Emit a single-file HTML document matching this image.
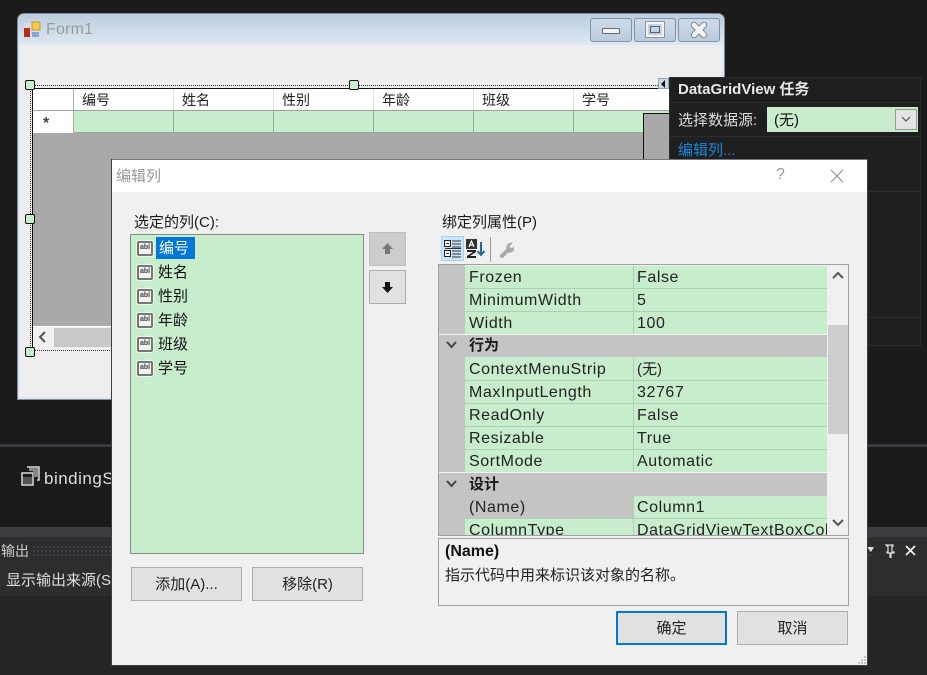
<!DOCTYPE html>
<html>
<head>
<meta charset="utf-8">
<style>
html,body{margin:0;padding:0;width:927px;height:675px;overflow:hidden;background:#1b1b1c}
body{position:relative;font-family:"Liberation Sans","Noto Sans CJK SC",sans-serif;font-size:15px;color:#1a1a1a}
div,span,svg{position:absolute;box-sizing:border-box}
.t{white-space:nowrap;line-height:20px;height:20px}
.h{font-size:14px;color:#222}
.g{letter-spacing:.58px;color:#222;font-size:16px}
.c{background:#c7edcc}
.btn{background:#e1e1e1;border:1px solid #adadad;text-align:center;line-height:33px;color:#222}
.hd{width:10px;height:10px;background:#c7edcc;border:1px solid #111;border-radius:2px}
.ab{width:16px;height:15px;background:#f2f2f2;border:2px solid #777;border-radius:2px;box-shadow:0 0 0 1px #eaf6ec;font:bold 7px/10px "Liberation Sans",sans-serif;text-align:center;color:#444;overflow:hidden}
.rowline{left:465px;width:362px;height:1px;background:#aed0b4}
.chev{left:445px;width:13px;height:10px}
</style>
</head>
<body>

<!-- IDE bottom -->
<div style="left:0;top:444px;width:927px;height:3px;background:#3a3a40"></div>
<svg style="left:20px;top:466px" width="21" height="21" viewBox="0 0 21 21"><path d="M7 1h12v13h-2M2 7h11v12H2z" fill="none" stroke="#ddd" stroke-width="1.5"/><path d="M9 2h9v9h-5V5H9z" fill="#888"/><path d="M3 11h9v7H3z" fill="#555"/></svg>
<div class="t" style="left:44px;top:469px;color:#ddd;font-size:17px;letter-spacing:.5px">bindingSource1</div>
<div style="left:0;top:527px;width:927px;height:10px;background:#3c3c42"></div>
<div style="left:0;top:537px;width:927px;height:28px;background:#2d2d30"></div>
<div style="left:32px;top:545px;width:840px;height:12px;background-image:radial-gradient(#46464a 1px,transparent 1px);background-size:4px 4px"></div>
<div style="left:0;top:565px;width:927px;height:31px;background:#2d2d30"></div>
<div style="left:0;top:596px;width:927px;height:79px;background:#252526"></div>
<div class="t" style="left:1px;top:541px;color:#ccc;font-size:14px">输出</div>
<div class="t" style="left:6px;top:571px;color:#ddd">显示输出来源(S):</div>
<svg style="left:866px;top:544px" width="50" height="14" viewBox="0 0 50 14"><path d="M1 3h7L5 8z" fill="#ddd"/><path d="M20 1h7v1h-1v6h2v1h-3v5h-1V9h-3V8h1V2h-1z" fill="none" stroke="#ddd" stroke-width="1.2"/><path d="M40 2l9 9M49 2l-9 9" stroke="#eee" stroke-width="1.8"/></svg>

<!-- Form -->
<div style="left:17px;top:13px;width:708px;height:387px;background:#dfe8f2;border:1px solid #7d8a99;border-radius:7px 7px 0 0;overflow:hidden"></div>
<div style="left:18px;top:14px;width:706px;height:31px;background:linear-gradient(#bccddd,#dde8f2);border-radius:6px 6px 0 0"></div>
<div style="left:20px;top:45px;width:702px;height:352px;background:#eeeeee"></div>
<svg style="left:23px;top:21px" width="18" height="18" viewBox="0 0 18 18"><rect x="1" y="2" width="16" height="16" fill="#d8dde4"/><rect x="1" y="7" width="6" height="9" fill="#b62a20"/><rect x="9" y="1" width="8" height="8" fill="#f3cc4d" stroke="#c99a2a"/><rect x="9" y="11" width="7" height="5" fill="#7fa8d8"/></svg>
<div class="t" style="left:46px;top:20px;color:#9a9a9a;font-size:16px;letter-spacing:.2px">Form1</div>
<div style="left:590px;top:18px;width:42px;height:24px;border:1px solid #8093a8;border-radius:3px;background:linear-gradient(#cddaea,#bccbdc)"></div>
<div style="left:634px;top:18px;width:42px;height:24px;border:1px solid #8093a8;border-radius:3px;background:linear-gradient(#cddaea,#bccbdc)"></div>
<div style="left:678px;top:18px;width:42px;height:24px;border:1px solid #8093a8;border-radius:3px;background:linear-gradient(#cddaea,#bccbdc)"></div>
<div style="left:602px;top:28px;width:18px;height:6px;background:#f4f4f4;border:1px solid #5f6b78;border-radius:1px"></div>
<div style="left:646px;top:22px;width:18px;height:15px;border:2px solid #f2f2f2;outline:1px solid #8a95a1"></div>
<div style="left:650px;top:26px;width:10px;height:7px;border:1px solid #55606c"></div>
<svg style="left:689px;top:21px" width="20" height="18" viewBox="0 0 20 18"><path d="M5 4l10 10M15 4L5 14" stroke="#7a8490" stroke-width="6.500" stroke-linecap="round"/><path d="M5 4l10 10M15 4L5 14" stroke="#f4f4f4" stroke-width="4.500" stroke-linecap="round"/></svg>

<!-- DGV -->
<div style="left:33px;top:88px;width:636px;height:240px;background:#a9a9a9"></div>
<div style="left:33px;top:88px;width:636px;height:23px;background:#fff;border-bottom:1px solid #a0a0a0"></div>
<div style="left:33px;top:111px;width:40px;height:22px;background:#fff"></div>
<div class="c" style="left:73px;top:111px;width:596px;height:22px;border-bottom:1px solid #9aa89c"></div>
<div style="left:32px;top:88px;width:637px;height:1px;background:#111"></div>
<div style="left:32px;top:88px;width:1px;height:262px;background:#111"></div>
<div style="left:73px;top:89px;width:1px;height:44px;background:#a7b3a9"></div>
<div style="left:173px;top:111px;width:1px;height:22px;background:#9aa89c"></div>
<div style="left:273px;top:111px;width:1px;height:22px;background:#9aa89c"></div>
<div style="left:373px;top:111px;width:1px;height:22px;background:#9aa89c"></div>
<div style="left:473px;top:111px;width:1px;height:22px;background:#9aa89c"></div>
<div style="left:573px;top:111px;width:1px;height:22px;background:#9aa89c"></div>
<div style="left:173px;top:89px;width:1px;height:21px;background:#e3e3e3"></div>
<div style="left:273px;top:89px;width:1px;height:21px;background:#e3e3e3"></div>
<div style="left:373px;top:89px;width:1px;height:21px;background:#e3e3e3"></div>
<div style="left:473px;top:89px;width:1px;height:21px;background:#e3e3e3"></div>
<div style="left:573px;top:89px;width:1px;height:21px;background:#e3e3e3"></div>
<div style="left:643px;top:113px;width:26px;height:50px;background:#a9a9a9;border-left:1px solid #111;border-top:1px solid #111"></div>
<div class="t h" style="left:82px;top:90px">编号</div>
<div class="t h" style="left:182px;top:90px">姓名</div>
<div class="t h" style="left:282px;top:90px">性别</div>
<div class="t h" style="left:382px;top:90px">年龄</div>
<div class="t h" style="left:482px;top:90px">班级</div>
<div class="t h" style="left:582px;top:90px">学号</div>
<div class="t" style="left:43px;top:114px;font-size:16px;font-weight:bold;color:#444">*</div>
<div style="left:33px;top:326px;width:80px;height:24px;background:#f0f0f0;border-top:1px solid #fff"></div>
<div style="left:54px;top:328px;width:60px;height:19px;background:#c8c8c8"></div>
<svg style="left:38px;top:331px" width="10" height="12" viewBox="0 0 10 12"><path d="M7 1L2 6l5 5" fill="none" stroke="#555" stroke-width="2"/></svg>
<div style="left:30px;top:85px;width:630px;height:1px;border-top:1px dotted #333"></div>
<div style="left:30px;top:350px;width:90px;height:1px;border-top:1px dotted #333"></div>
<div style="left:30px;top:85px;width:1px;height:265px;border-left:1px dotted #333"></div>
<div class="hd" style="left:25px;top:80px"></div>
<div class="hd" style="left:349px;top:80px"></div>
<div class="hd" style="left:25px;top:214px"></div>
<div class="hd" style="left:25px;top:347px"></div>
<div style="left:658px;top:78px;width:11px;height:11px;background:#c9d9ea;border:1px solid #8aa"></div>
<svg style="left:660px;top:80px" width="7" height="8" viewBox="0 0 7 8"><path d="M5 0v8L1 4z" fill="#111"/></svg>

<!-- Tasks panel -->
<div style="left:669px;top:77px;width:252px;height:269px;background:#1f1f20;border:1px solid #2d2d30"></div>
<div style="left:670px;top:102px;width:250px;height:1px;background:#2d2d30"></div>
<div style="left:670px;top:136px;width:250px;height:1px;background:#2d2d30"></div>
<div style="left:670px;top:191px;width:250px;height:1px;background:#2d2d30"></div>
<div style="left:670px;top:317px;width:250px;height:1px;background:#2d2d30"></div>
<div class="t" style="left:678px;top:80px;color:#e8e8e8;font-weight:bold;font-size:15px">DataGridView 任务</div>
<div class="t" style="left:678px;top:111px;color:#ddd">选择数据源:</div>
<div class="c" style="left:767px;top:107px;width:151px;height:25px"></div>
<div class="t" style="left:774px;top:111px;color:#111">(无)</div>
<div style="left:895px;top:109px;width:22px;height:21px;background:#e4e4e4;border:1px solid #999"></div>
<svg style="left:901px;top:116px" width="10" height="7" viewBox="0 0 10 7"><path d="M1 1l4 4 4-4" fill="none" stroke="#555" stroke-width="1.2"/></svg>
<div class="t" style="left:678px;top:141px;color:#1a87d8;font-size:15px">编辑列...</div>

<!-- Dialog -->
<div style="left:111px;top:159px;width:757px;height:507px;background:#3d3d40"></div>
<div style="left:112px;top:159px;width:755px;height:1px;background:#777"></div>
<div style="left:112px;top:160px;width:755px;height:505px;background:#f0f0f0"></div>
<div style="left:112px;top:160px;width:755px;height:32px;background:#fff"></div>
<div class="t" style="left:116px;top:167px;color:#999;font-size:15px">编辑列</div>
<div class="t" style="left:776px;top:165px;color:#999;font-size:16px">?</div>
<svg style="left:830px;top:169px" width="14" height="14" viewBox="0 0 14 14"><path d="M1 1l12 12M13 1L1 13" stroke="#888" stroke-width="1"/></svg>

<div class="t" style="left:134px;top:213px">选定的列(C):</div>
<div class="c" style="left:130px;top:234px;width:234px;height:320px;border:1px solid #828f84"></div>
<div style="left:156px;top:237px;width:39px;height:22px;background:#0078d7"></div>
<div class="t" style="left:159px;top:239px;color:#fff">编号</div>
<div class="t" style="left:158px;top:263px;color:#111">姓名</div>
<div class="t" style="left:158px;top:287px;color:#111">性别</div>
<div class="t" style="left:158px;top:311px;color:#111">年龄</div>
<div class="t" style="left:158px;top:335px;color:#111">班级</div>
<div class="t" style="left:158px;top:359px;color:#111">学号</div>
<div class="ab" style="left:137px;top:241px">abl</div>
<div class="ab" style="left:137px;top:265px">abl</div>
<div class="ab" style="left:137px;top:289px">abl</div>
<div class="ab" style="left:137px;top:313px">abl</div>
<div class="ab" style="left:137px;top:337px">abl</div>
<div class="ab" style="left:137px;top:361px">abl</div>

<div style="left:369px;top:232px;width:37px;height:34px;background:#cccccc;border:1px solid #bfbfbf"></div>
<div class="btn" style="left:369px;top:270px;width:37px;height:34px"></div>
<svg style="left:381px;top:242px" width="13" height="13" viewBox="0 0 13 13"><path d="M6.500 1L12 7H9v5H4V7H1z" fill="#777"/></svg>
<svg style="left:381px;top:281px" width="13" height="13" viewBox="0 0 13 13"><path d="M6.500 12L12 6H9V1H4v5H1z" fill="#111"/></svg>

<div class="btn" style="left:131px;top:567px;width:111px;height:34px">添加(A)...</div>
<div class="btn" style="left:252px;top:567px;width:111px;height:34px">移除(R)</div>

<div class="t" style="left:442px;top:213px">绑定列属性(P)</div>
<div style="left:441px;top:236px;width:23px;height:25px;background:#cce4f7;border:1px solid #a8d0f0"></div>
<svg style="left:444px;top:240px" width="18" height="18" viewBox="0 0 18 18"><rect x="0.500" y="0.500" width="6" height="6" fill="#fff" stroke="#222"/><rect x="0.500" y="10.500" width="6" height="6" fill="#fff" stroke="#222"/><path d="M8 1h9M8 4h9M8 7h9M1 8.500h16M8 11h9M8 14h9M8 17h9M2 3.500h3M2 13.500h3" stroke="#333"/></svg>
<svg style="left:466px;top:239px" width="21" height="20" viewBox="0 0 21 20"><rect x="0" y="0" width="11" height="10" fill="#333"/><path d="M3 8l2.500-6L8 8M4 6h3" fill="none" stroke="#fff" stroke-width="1.200"/><path d="M1 11h9v2l-6 4h6v2H1v-2l6-4H1z" fill="#222"/><path d="M15 3v13M11.500 12l3.500 4 3.500-4" fill="none" stroke="#1a6fa0" stroke-width="2"/></svg>
<div style="left:490px;top:237px;width:1px;height:25px;background:#999"></div>
<svg style="left:498px;top:241px" width="16" height="17" viewBox="0 0 16 17"><path d="M2 15l7-7c-1-3 1-6 5-6l-3 3 1 2 2 1 2-2c0 4-3 6-6 5l-6 6z" fill="#aaa" stroke="#aaa"/></svg>

<div style="left:438px;top:264px;width:411px;height:272px;background:#f0f0f0;border:1px solid #a0a0a0"></div>
<div style="left:439px;top:265px;width:26px;height:270px;background:#c4c4c4"></div>
<div class="c" style="left:465px;top:266px;width:362px;height:68px"></div>
<div style="left:439px;top:334px;width:388px;height:1px;background:#f2f2f2"></div>
<div style="left:439px;top:335px;width:388px;height:22px;background:#c4c4c4"></div>
<div class="c" style="left:465px;top:357px;width:362px;height:115px"></div>
<div style="left:439px;top:472px;width:388px;height:1px;background:#f2f2f2"></div>
<div style="left:439px;top:473px;width:388px;height:23px;background:#c4c4c4"></div>
<div style="left:465px;top:496px;width:169px;height:23px;background:#c4c4c4"></div>
<div class="c" style="left:634px;top:496px;width:193px;height:23px"></div>
<div class="c" style="left:465px;top:519px;width:362px;height:16px"></div>
<div class="rowline" style="top:288px"></div>
<div class="rowline" style="top:311px"></div>
<div class="rowline" style="top:380px"></div>
<div class="rowline" style="top:403px"></div>
<div class="rowline" style="top:426px"></div>
<div class="rowline" style="top:449px"></div>
<div class="rowline" style="top:518px"></div>
<div style="left:633px;top:266px;width:1px;height:68px;background:#aed0b4"></div>
<div style="left:633px;top:357px;width:1px;height:115px;background:#aed0b4"></div>
<div style="left:633px;top:496px;width:1px;height:39px;background:#aed0b4"></div>
<div style="left:828px;top:325px;width:20px;height:109px;background:#cdcdcd"></div>
<svg style="left:832px;top:271px" width="12" height="8" viewBox="0 0 12 8"><path d="M1 7l5-5 5 5" fill="none" stroke="#555" stroke-width="2"/></svg>
<svg style="left:832px;top:519px" width="12" height="8" viewBox="0 0 12 8"><path d="M1 1l5 5 5-5" fill="none" stroke="#555" stroke-width="2"/></svg>
<svg class="chev" style="top:340px" viewBox="0 0 13 10"><path d="M2 2l4.500 5L11 2" fill="none" stroke="#444" stroke-width="2"/></svg>
<svg class="chev" style="top:479px" viewBox="0 0 13 10"><path d="M2 2l4.500 5L11 2" fill="none" stroke="#444" stroke-width="2"/></svg>

<div class="t g" style="left:469px;top:268px">Frozen</div><div class="t g" style="left:637px;top:268px">False</div>
<div class="t g" style="left:469px;top:291px">MinimumWidth</div><div class="t g" style="left:637px;top:291px">5</div>
<div class="t g" style="left:469px;top:314px">Width</div><div class="t g" style="left:637px;top:314px">100</div>
<div class="t" style="left:469px;top:336px;font-weight:bold;font-size:15px">行为</div>
<div class="t g" style="left:469px;top:360px">ContextMenuStrip</div><div class="t g" style="left:637px;top:360px;letter-spacing:0;font-size:15px">(无)</div>
<div class="t g" style="left:469px;top:383px">MaxInputLength</div><div class="t g" style="left:637px;top:383px">32767</div>
<div class="t g" style="left:469px;top:406px">ReadOnly</div><div class="t g" style="left:637px;top:406px">False</div>
<div class="t g" style="left:469px;top:429px">Resizable</div><div class="t g" style="left:637px;top:429px">True</div>
<div class="t g" style="left:469px;top:452px">SortMode</div><div class="t g" style="left:637px;top:452px">Automatic</div>
<div class="t" style="left:469px;top:475px;font-weight:bold;font-size:15px">设计</div>
<div class="t g" style="left:469px;top:498px">(Name)</div><div class="t g" style="left:637px;top:498px">Column1</div>
<div style="left:465px;top:519px;width:362px;height:16px;overflow:hidden">
<div class="t g" style="left:4px;top:2px">ColumnType</div><div class="t g" style="left:172px;top:2px">DataGridViewTextBoxColumn</div>
</div>

<div style="left:438px;top:538px;width:411px;height:68px;background:#f0f0f0;border:1px solid #a0a0a0"></div>
<div class="t" style="left:445px;top:542px;font-weight:bold;color:#111;font-size:16px">(Name)</div>
<div class="t" style="left:445px;top:566px;color:#222">指示代码中用来标识该对象的名称。</div>

<div class="btn" style="left:616px;top:611px;width:111px;height:34px;border:2px solid #0078d7;line-height:32px">确定</div>
<div class="btn" style="left:737px;top:611px;width:111px;height:34px">取消</div>
<svg style="left:856px;top:655px" width="11" height="10" viewBox="0 0 11 10"><path d="M8 1h2v2H8zM5 4h2v2H5zM8 4h2v2H8zM2 7h2v2H2zM5 7h2v2H5zM8 7h2v2H8z" fill="#c4c4c4"/></svg>

</body>
</html>
